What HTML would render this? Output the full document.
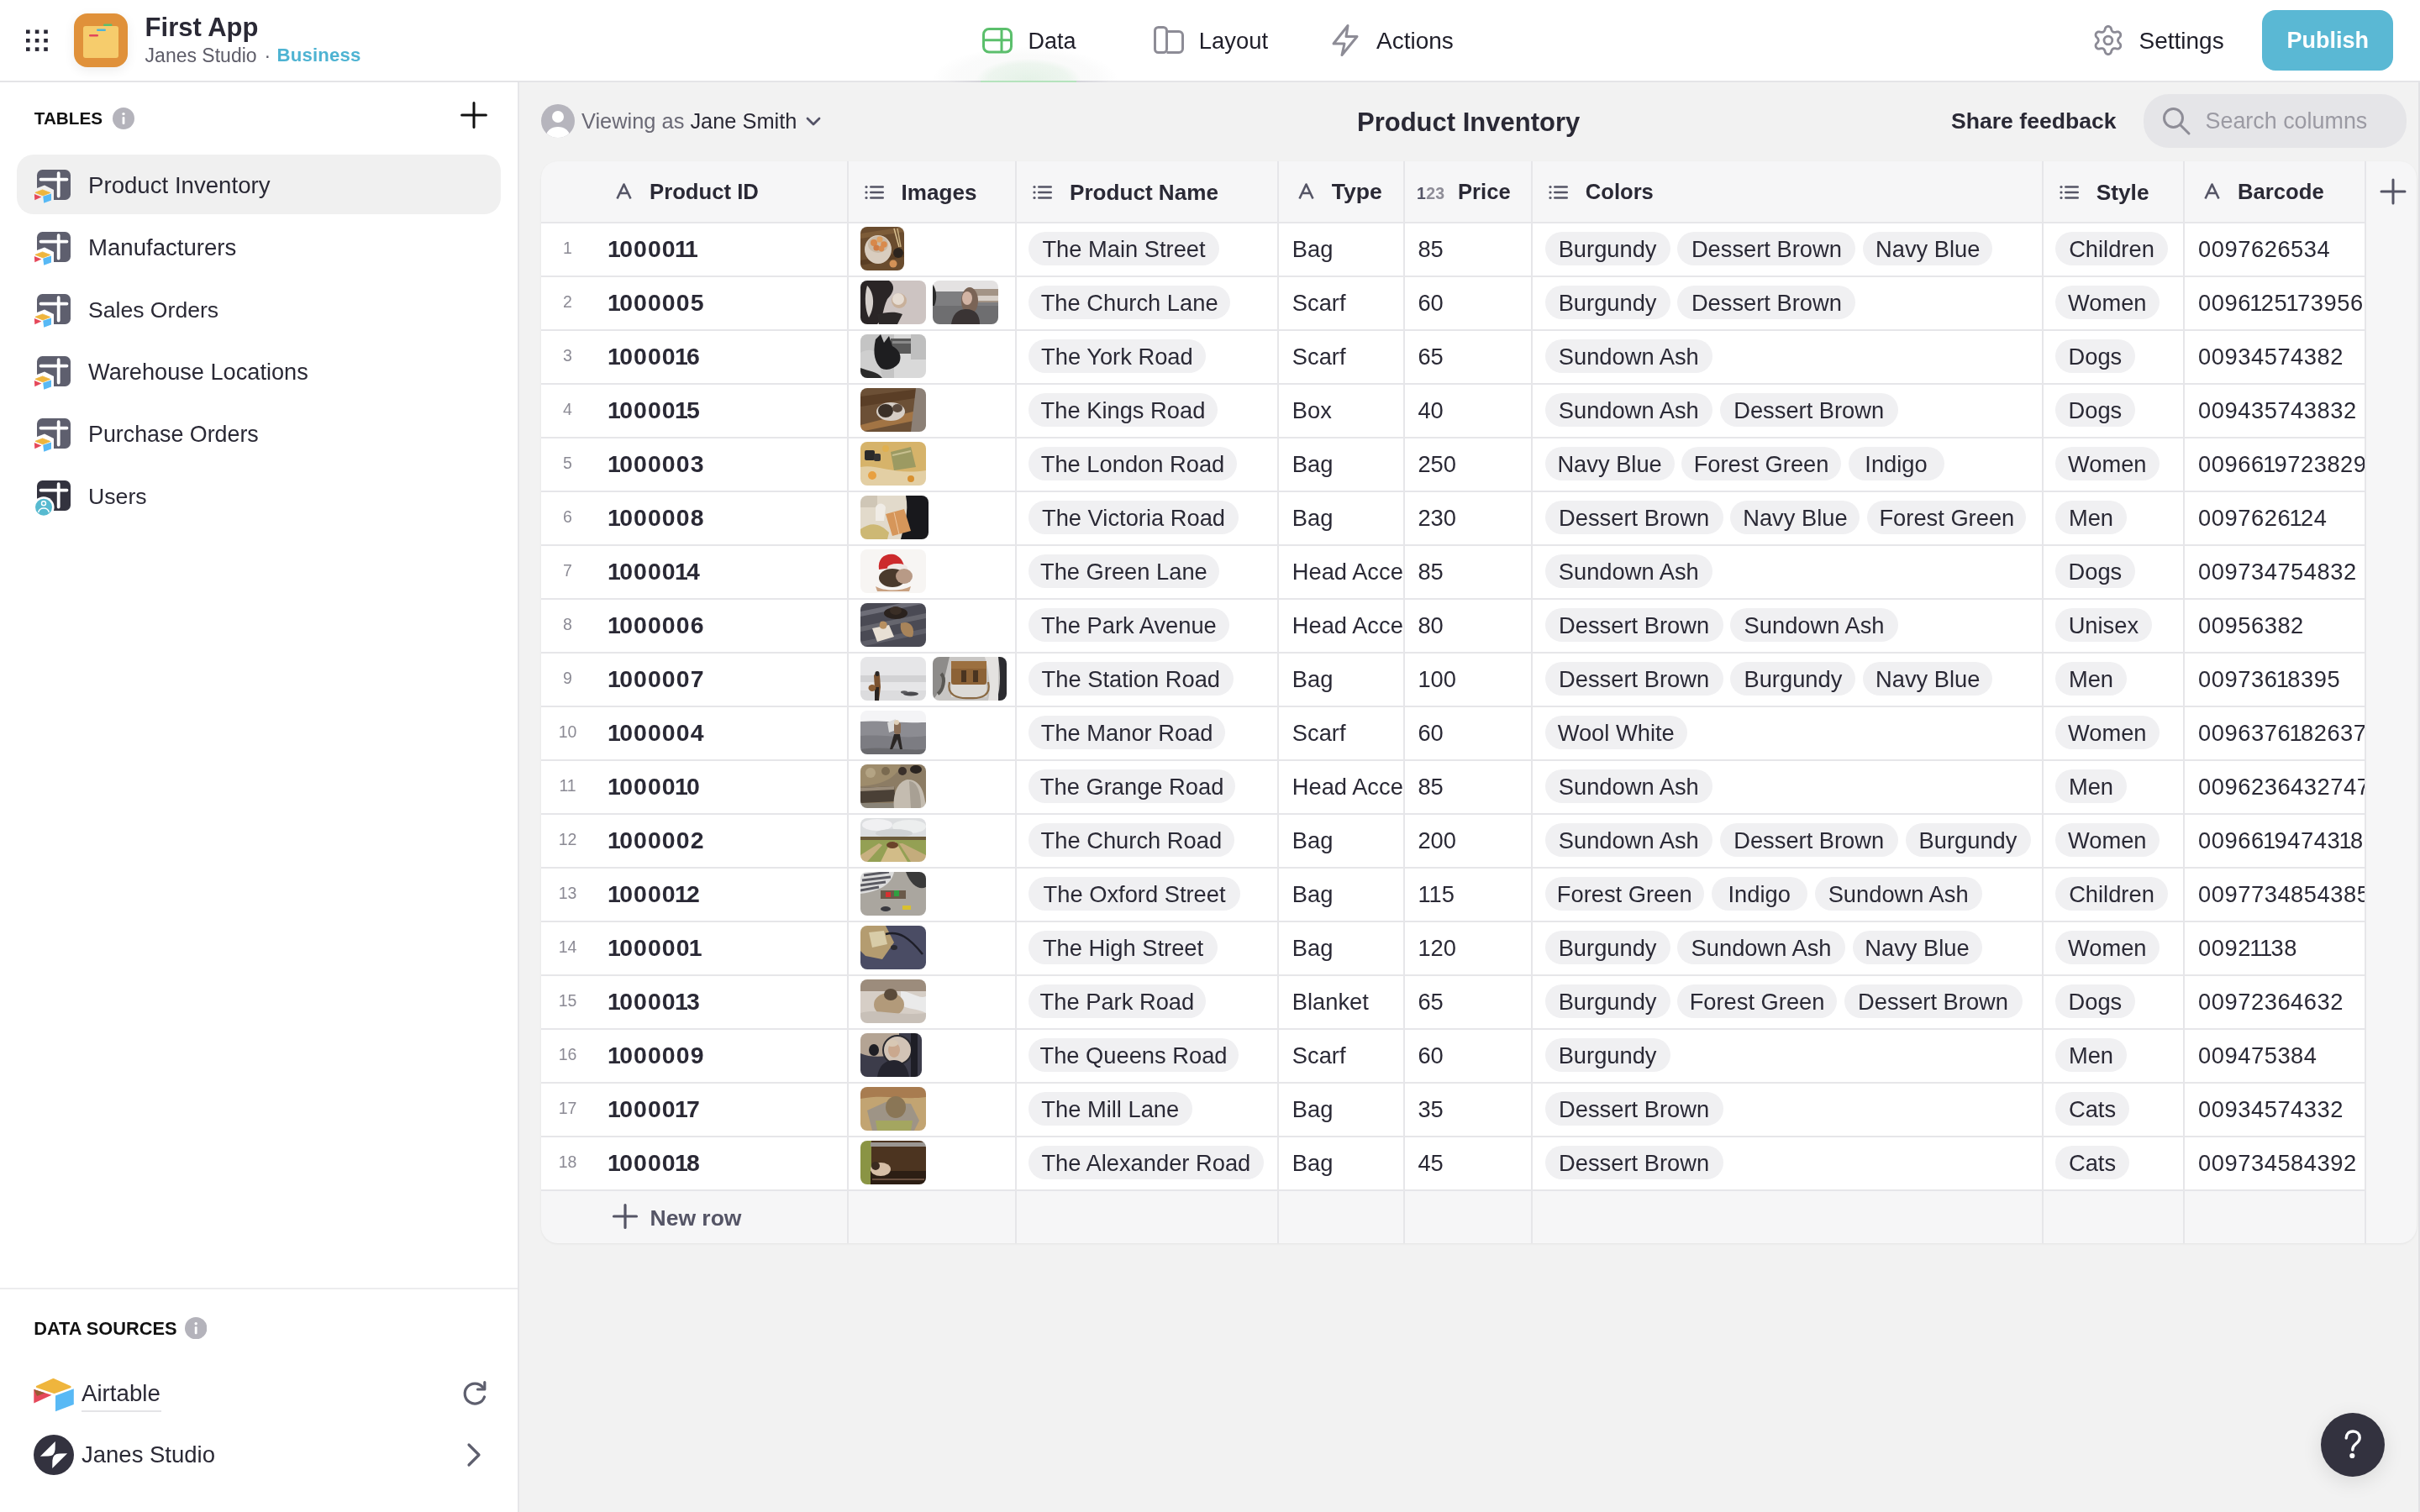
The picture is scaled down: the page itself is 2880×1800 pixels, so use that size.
<!DOCTYPE html><html><head><meta charset="utf-8"><style>html,body{margin:0;padding:0;width:2880px;height:1800px;overflow:hidden;}body{position:relative;font-family:"Liberation Sans", sans-serif;}.t{position:absolute;white-space:nowrap;}#root{position:absolute;left:0;top:0;width:2880px;height:1800px;will-change:transform;transform-origin:0 0;}@media (max-width:1500px){html,body{width:1440px;height:900px;}#root{transform:scale(0.5);}}.b{position:absolute;}</style></head><body><div id="root"><div class="b" style="left:0px;top:0px;width:2880px;height:1800px;background:#f2f2f2"></div><div class="b" style="left:0px;top:0px;width:2880px;height:96px;background:#fff"></div><div class="b" style="left:0px;top:96px;width:2880px;height:2px;background:#e4e4e7"></div><div class="b" style="left:0px;top:98px;width:616px;height:1702px;background:#fff"></div><div class="b" style="left:616px;top:98px;width:2px;height:1702px;background:#e6e6e9"></div><div class="b" style="left:2878px;top:98px;width:2px;height:1702px;background:#e2e2e5"></div><svg class="b" style="left:0px;top:0px;" width="70" height="80" viewBox="0 0 70 80"><rect x="31" y="35.5" width="4.6" height="4.6" fill="#2a2935"/><rect x="41.8" y="35.5" width="4.6" height="4.6" fill="#2a2935"/><rect x="52.2" y="35.5" width="4.6" height="4.6" fill="#2a2935"/><rect x="31" y="46" width="4.6" height="4.6" fill="#2a2935"/><rect x="41.8" y="46" width="4.6" height="4.6" fill="#2a2935"/><rect x="52.2" y="46" width="4.6" height="4.6" fill="#2a2935"/><rect x="31" y="56.3" width="4.6" height="4.6" fill="#2a2935"/><rect x="41.8" y="56.3" width="4.6" height="4.6" fill="#2a2935"/><rect x="52.2" y="56.3" width="4.6" height="4.6" fill="#2a2935"/></svg><div class="b" style="left:88px;top:16px;width:64px;height:64px;background:#e0913a;border-radius:16px;box-shadow:0 4px 14px rgba(0,0,0,0.07)"></div><svg class="b" style="left:88px;top:16px;" width="64" height="64" viewBox="0 0 64 64"><rect x="11" y="15" width="42" height="38" rx="3" fill="#f6cc6c"/><rect x="18" y="25" width="11" height="2.6" rx="1.3" fill="#e2475a"/><rect x="27" y="18.5" width="11" height="2.6" rx="1.3" fill="#4fb3d6"/><rect x="35" y="12.5" width="10.5" height="2.6" rx="1.3" fill="#5bbf70"/></svg><div class="t" style="left:172.6px;top:16.76px;font-size:31px;line-height:31px;color:#2a2935;font-weight:700;">First App</div><div class="t" style="left:172.6px;top:54.53px;font-size:23px;line-height:23px;color:#5d5c68;font-weight:400;">Janes Studio</div><div class="t" style="left:314.5px;top:54.53px;font-size:23px;line-height:23px;color:#5d5c68;font-weight:400;">&middot;</div><div class="t" style="left:329.6px;top:55.21px;font-size:22.2px;line-height:22.2px;color:#4eb3d2;font-weight:700;letter-spacing:0.15px">Business</div><svg class="b" style="left:1169px;top:33px;" width="37" height="31" viewBox="0 0 37 31"><rect x="1.5" y="1.5" width="33" height="27.5" rx="6.5" fill="none" stroke="#5bbf6c" stroke-width="3"/><line x1="1.5" y1="14.8" x2="35" y2="14.8" stroke="#5bbf6c" stroke-width="3"/><line x1="23" y1="1.5" x2="23" y2="29" stroke="#5bbf6c" stroke-width="3"/></svg><div class="t" style="left:1223.5px;top:35.74px;font-size:27px;line-height:27px;color:#1f1e29;font-weight:400;">Data</div><svg class="b" style="left:1373px;top:30.5px;" width="36" height="33" viewBox="0 0 36 33"><rect x="1.5" y="1.5" width="14" height="30" rx="4" fill="none" stroke="#8d8c96" stroke-width="3"/><path d="M15.5 6.5 H30 a4.5 4.5 0 0 1 4.5 4.5 V27 a4.5 4.5 0 0 1 -4.5 4.5 H15.5" fill="none" stroke="#8d8c96" stroke-width="3"/></svg><div class="t" style="left:1426.8px;top:35.41px;font-size:27.4px;line-height:27.4px;color:#1f1e29;font-weight:400;">Layout</div><svg class="b" style="left:1583px;top:28px;" width="36" height="40" viewBox="0 0 36 40"><path d="M21 2.5 L4 24 H17 L14 37.5 L32 15.5 H19 Z" fill="none" stroke="#8d8c96" stroke-width="3" stroke-linejoin="round"/></svg><div class="t" style="left:1638px;top:34.90px;font-size:28px;line-height:28px;color:#1f1e29;font-weight:400;">Actions</div><div class="b" style="left:1100px;top:56px;width:240px;height:40px;overflow:hidden"><div style="position:absolute;left:10px;top:0;width:220px;height:80px;border-radius:50%;background:radial-gradient(ellipse at center, rgba(120,130,125,0.05) 0%, rgba(120,130,125,0.035) 55%, rgba(120,130,125,0) 72%)"></div><div style="position:absolute;left:62px;top:14px;width:124px;height:52px;border-radius:50%;background:radial-gradient(ellipse at center, rgba(95,193,112,0.13) 0%, rgba(95,193,112,0.08) 55%, rgba(95,193,112,0) 72%)"></div></div><div class="b" style="left:1130px;top:96px;width:190px;height:2px;background:linear-gradient(90deg, rgba(200,200,206,0), #cfcfd6 25%, #cfcfd6 75%, rgba(200,200,206,0))"></div><div class="b" style="left:1167px;top:96px;width:114px;height:2px;background:#b5e3bd"></div><svg class="b" style="left:2490px;top:28px;" width="38" height="40" viewBox="0 0 38 40"><path d="M18.90,3.40 L19.48,3.45 L20.05,3.59 L20.60,3.83 L21.12,4.17 L21.62,4.60 L22.06,5.13 L22.44,5.82 L22.64,6.94 L22.92,7.64 L23.20,8.20 L23.48,8.68 L23.76,9.09 L24.05,9.44 L24.36,9.72 L24.70,9.95 L25.07,10.13 L25.47,10.26 L25.92,10.34 L26.42,10.38 L26.97,10.38 L27.60,10.34 L28.34,10.23 L29.41,9.85 L30.19,9.83 L30.88,9.95 L31.50,10.16 L32.05,10.45 L32.53,10.80 L32.95,11.22 L33.28,11.70 L33.52,12.22 L33.68,12.79 L33.75,13.39 L33.72,14.01 L33.60,14.65 L33.35,15.30 L32.95,15.97 L32.08,16.71 L31.62,17.30 L31.27,17.82 L30.99,18.30 L30.78,18.75 L30.62,19.18 L30.53,19.59 L30.50,20.00 L30.53,20.41 L30.62,20.82 L30.78,21.25 L30.99,21.70 L31.27,22.18 L31.62,22.70 L32.08,23.29 L32.95,24.03 L33.35,24.70 L33.60,25.35 L33.72,25.99 L33.75,26.61 L33.68,27.21 L33.52,27.78 L33.28,28.30 L32.95,28.78 L32.53,29.20 L32.05,29.55 L31.50,29.84 L30.88,30.05 L30.19,30.17 L29.41,30.15 L28.34,29.77 L27.60,29.66 L26.97,29.62 L26.42,29.62 L25.92,29.66 L25.47,29.74 L25.07,29.87 L24.70,30.05 L24.36,30.28 L24.05,30.56 L23.76,30.91 L23.48,31.32 L23.20,31.80 L22.92,32.36 L22.64,33.06 L22.44,34.18 L22.06,34.87 L21.62,35.40 L21.12,35.83 L20.60,36.17 L20.05,36.41 L19.48,36.55 L18.90,36.60 L18.32,36.55 L17.75,36.41 L17.20,36.17 L16.68,35.83 L16.18,35.40 L15.74,34.87 L15.36,34.18 L15.16,33.06 L14.88,32.36 L14.60,31.80 L14.32,31.32 L14.04,30.91 L13.75,30.56 L13.44,30.28 L13.10,30.05 L12.73,29.87 L12.33,29.74 L11.88,29.66 L11.38,29.62 L10.83,29.62 L10.20,29.66 L9.46,29.77 L8.39,30.15 L7.61,30.17 L6.92,30.05 L6.30,29.84 L5.75,29.55 L5.27,29.20 L4.85,28.78 L4.52,28.30 L4.28,27.78 L4.12,27.21 L4.05,26.61 L4.08,25.99 L4.20,25.35 L4.45,24.70 L4.85,24.03 L5.72,23.29 L6.18,22.70 L6.53,22.18 L6.81,21.70 L7.02,21.25 L7.18,20.82 L7.27,20.41 L7.30,20.00 L7.27,19.59 L7.18,19.18 L7.02,18.75 L6.81,18.30 L6.53,17.82 L6.18,17.30 L5.72,16.71 L4.85,15.97 L4.45,15.30 L4.20,14.65 L4.08,14.01 L4.05,13.39 L4.12,12.79 L4.28,12.22 L4.52,11.70 L4.85,11.22 L5.27,10.80 L5.75,10.45 L6.30,10.16 L6.92,9.95 L7.61,9.83 L8.39,9.85 L9.46,10.23 L10.20,10.34 L10.83,10.38 L11.38,10.38 L11.88,10.34 L12.33,10.26 L12.73,10.13 L13.10,9.95 L13.44,9.72 L13.75,9.44 L14.04,9.09 L14.32,8.68 L14.60,8.20 L14.88,7.64 L15.16,6.94 L15.36,5.82 L15.74,5.13 L16.18,4.60 L16.68,4.17 L17.20,3.83 L17.75,3.59 L18.32,3.45 Z" fill="none" stroke="#8b8a95" stroke-width="2.8" stroke-linejoin="round"/><circle cx="18.9" cy="20" r="4.9" fill="none" stroke="#8b8a95" stroke-width="2.8"/></svg><div class="t" style="left:2545.5px;top:34.50px;font-size:28px;line-height:28px;color:#1f1e29;font-weight:400;">Settings</div><div class="b" style="left:2692px;top:12px;width:156px;height:72px;background:#5ab8d4;border-radius:16px"></div><div class="t" style="left:2721.5px;top:35.34px;font-size:27px;line-height:27px;color:#fff;font-weight:700;">Publish</div><div class="t" style="left:40.8px;top:131.48px;font-size:20.7px;line-height:20.7px;color:#111;font-weight:700;">TABLES</div><svg class="b" style="left:134px;top:128px;" width="26" height="26" viewBox="0 0 26 26"><circle cx="13" cy="13" r="13" fill="#b4b3bb"/><rect x="11.6" y="11" width="2.8" height="9" rx="1" fill="#fff"/><circle cx="13" cy="7.6" r="1.7" fill="#fff"/></svg><svg class="b" style="left:546px;top:119px;" width="36" height="36" viewBox="0 0 36 36"><path d="M18 3.6 V32.4 M3.6 18 H32.4" stroke="#111" stroke-width="3" stroke-linecap="round"/></svg><div class="b" style="left:20px;top:184px;width:576px;height:71px;background:#f0f0f0;border-radius:20px"></div><svg class="b" style="left:40px;top:198px;" width="48" height="48" viewBox="0 0 48 48"><rect x="4" y="4" width="40" height="36" rx="6.5" fill="#5e5f6e"/><path d="M8.5 15.6 H39.5 M29.7 8.2 V35.5" stroke="#fff" stroke-width="3.8" stroke-linecap="round"/><path d="M0 27.5 L13 22.5 L24 28 L24 48 L0 48 Z" fill="#f0f0f0"/><path d="M1.9 31.3 L10.6 27.9 L19.8 31.5 L11 34.9 Z" fill="#efb53d" stroke="#efb53d" stroke-width="0.8" stroke-linejoin="round"/><path d="M0.9 32.9 L9.4 36.4 L1.3 40.2 Z" fill="#e5485a"/><path d="M11.2 35.7 L21 32.5 L21 40.6 L12.2 43.8 Z" fill="#58b9f5"/></svg><div class="t" style="left:105.0px;top:207.11px;font-size:27.63px;line-height:27.63px;color:#2a2935;font-weight:400;">Product Inventory</div><svg class="b" style="left:40px;top:272px;" width="48" height="48" viewBox="0 0 48 48"><rect x="4" y="4" width="40" height="36" rx="6.5" fill="#5e5f6e"/><path d="M8.5 15.6 H39.5 M29.7 8.2 V35.5" stroke="#fff" stroke-width="3.8" stroke-linecap="round"/><path d="M0 27.5 L13 22.5 L24 28 L24 48 L0 48 Z" fill="#fff"/><path d="M1.9 31.3 L10.6 27.9 L19.8 31.5 L11 34.9 Z" fill="#efb53d" stroke="#efb53d" stroke-width="0.8" stroke-linejoin="round"/><path d="M0.9 32.9 L9.4 36.4 L1.3 40.2 Z" fill="#e5485a"/><path d="M11.2 35.7 L21 32.5 L21 40.6 L12.2 43.8 Z" fill="#58b9f5"/></svg><div class="t" style="left:105.0px;top:281.15px;font-size:27.59px;line-height:27.59px;color:#2a2935;font-weight:400;">Manufacturers</div><svg class="b" style="left:40px;top:346px;" width="48" height="48" viewBox="0 0 48 48"><rect x="4" y="4" width="40" height="36" rx="6.5" fill="#5e5f6e"/><path d="M8.5 15.6 H39.5 M29.7 8.2 V35.5" stroke="#fff" stroke-width="3.8" stroke-linecap="round"/><path d="M0 27.5 L13 22.5 L24 28 L24 48 L0 48 Z" fill="#fff"/><path d="M1.9 31.3 L10.6 27.9 L19.8 31.5 L11 34.9 Z" fill="#efb53d" stroke="#efb53d" stroke-width="0.8" stroke-linejoin="round"/><path d="M0.9 32.9 L9.4 36.4 L1.3 40.2 Z" fill="#e5485a"/><path d="M11.2 35.7 L21 32.5 L21 40.6 L12.2 43.8 Z" fill="#58b9f5"/></svg><div class="t" style="left:105.0px;top:355.99px;font-size:26.59px;line-height:26.59px;color:#2a2935;font-weight:400;">Sales Orders</div><svg class="b" style="left:40px;top:420px;" width="48" height="48" viewBox="0 0 48 48"><rect x="4" y="4" width="40" height="36" rx="6.5" fill="#5e5f6e"/><path d="M8.5 15.6 H39.5 M29.7 8.2 V35.5" stroke="#fff" stroke-width="3.8" stroke-linecap="round"/><path d="M0 27.5 L13 22.5 L24 28 L24 48 L0 48 Z" fill="#fff"/><path d="M1.9 31.3 L10.6 27.9 L19.8 31.5 L11 34.9 Z" fill="#efb53d" stroke="#efb53d" stroke-width="0.8" stroke-linejoin="round"/><path d="M0.9 32.9 L9.4 36.4 L1.3 40.2 Z" fill="#e5485a"/><path d="M11.2 35.7 L21 32.5 L21 40.6 L12.2 43.8 Z" fill="#58b9f5"/></svg><div class="t" style="left:105.0px;top:429.49px;font-size:27.18px;line-height:27.18px;color:#2a2935;font-weight:400;">Warehouse Locations</div><svg class="b" style="left:40px;top:494px;" width="48" height="48" viewBox="0 0 48 48"><rect x="4" y="4" width="40" height="36" rx="6.5" fill="#5e5f6e"/><path d="M8.5 15.6 H39.5 M29.7 8.2 V35.5" stroke="#fff" stroke-width="3.8" stroke-linecap="round"/><path d="M0 27.5 L13 22.5 L24 28 L24 48 L0 48 Z" fill="#fff"/><path d="M1.9 31.3 L10.6 27.9 L19.8 31.5 L11 34.9 Z" fill="#efb53d" stroke="#efb53d" stroke-width="0.8" stroke-linejoin="round"/><path d="M0.9 32.9 L9.4 36.4 L1.3 40.2 Z" fill="#e5485a"/><path d="M11.2 35.7 L21 32.5 L21 40.6 L12.2 43.8 Z" fill="#58b9f5"/></svg><div class="t" style="left:105.0px;top:503.78px;font-size:26.84px;line-height:26.84px;color:#2a2935;font-weight:400;">Purchase Orders</div><svg class="b" style="left:40px;top:568px;" width="48" height="48" viewBox="0 0 48 48"><rect x="4" y="4" width="40" height="36" rx="6.5" fill="#33333f"/><path d="M8.5 15.6 H39.5 M29.7 8.2 V35.5" stroke="#fff" stroke-width="3.8" stroke-linecap="round"/><circle cx="12" cy="35.8" r="12.6" fill="#fff"/><circle cx="12" cy="35.8" r="10" fill="#57bad0"/><circle cx="12" cy="31.2" r="2.5" fill="none" stroke="#fff" stroke-width="1.4"/><path d="M5.6 42 a6.6 6.6 0 0 1 12.8 0" fill="none" stroke="#fff" stroke-width="1.4"/></svg><div class="t" style="left:105.0px;top:577.92px;font-size:26.67px;line-height:26.67px;color:#2a2935;font-weight:400;">Users</div><div class="b" style="left:0px;top:1533px;width:616px;height:2px;background:#ececee"></div><div class="t" style="left:40.2px;top:1570.55px;font-size:21.8px;line-height:21.8px;color:#111;font-weight:700;">DATA SOURCES</div><svg class="b" style="left:219.6px;top:1567.5px;" width="26.4" height="26.4" viewBox="0 0 26.4 26.4"><circle cx="13.2" cy="13.2" r="13.2" fill="#b4b3bb"/><rect x="11.8" y="11.2" width="2.8" height="9" rx="1" fill="#fff"/><circle cx="13.2" cy="7.8" r="1.7" fill="#fff"/></svg><svg class="b" style="left:40px;top:1639px;" width="48" height="42" viewBox="0 0 48 42"><path d="M4 11.8 L23.5 3.2 L43.5 12 L24.5 18.8 Z" fill="#efb53d" stroke="#efb53d" stroke-width="2.4" stroke-linejoin="round"/><path d="M0.3 15 L21.5 21.8 L0.3 31.6 Z" fill="#e5485a"/><path d="M0.3 15 L13.5 19.2 L4 23 Z" fill="#985a32"/><path d="M26 22.6 L47.8 14.2 L47.8 33 L26 41.2 Z" fill="#58b9f5"/></svg><div class="t" style="left:97px;top:1645.05px;font-size:27.7px;line-height:27.7px;color:#2a2935;font-weight:400;">Airtable</div><div class="b" style="left:97px;top:1679px;width:95px;height:2px;background:#e4e4e7"></div><svg class="b" style="left:548px;top:1642px;" width="34" height="34" viewBox="0 0 34 34"><path d="M26.5 9.5 A12 12 0 1 0 28.5 21" fill="none" stroke="#5e5f6e" stroke-width="3.2" stroke-linecap="round"/><path d="M28.8 3.5 V12 H20.5" fill="none" stroke="#5e5f6e" stroke-width="3.2" stroke-linecap="round" stroke-linejoin="round"/></svg><svg class="b" style="left:40px;top:1708px;" width="48" height="48" viewBox="0 0 48 48"><circle cx="24" cy="24" r="24" fill="#33323f"/><path d="M9 24 C16 23 22 17 23 9 C22 17 18 22 9 24 Z M24 24 C30 25 34 30 35 38" fill="none"/><path d="M7.9 25.7 L25.8 7.9 L25.6 17.4 Q25 25.5 17.4 25.5 Z" fill="#fff"/><path d="M40.1 22.3 L22.2 40.1 L22.4 30.6 Q23 22.5 30.6 22.5 Z" fill="#fff"/></svg><div class="t" style="left:97px;top:1718.22px;font-size:27.5px;line-height:27.5px;color:#2a2935;font-weight:400;">Janes Studio</div><svg class="b" style="left:552px;top:1716px;" width="24" height="32" viewBox="0 0 24 32"><path d="M6 4 L18 16 L6 28" fill="none" stroke="#5e5f6e" stroke-width="3.2" stroke-linecap="round" stroke-linejoin="round"/></svg><svg class="b" style="left:644px;top:124px;" width="40" height="40" viewBox="0 0 40 40"><defs><clipPath id="avc"><circle cx="20" cy="20" r="20"/></clipPath></defs><circle cx="20" cy="20" r="20" fill="#b6b5bd"/><g clip-path="url(#avc)"><circle cx="20" cy="15" r="7" fill="#fff"/><ellipse cx="20" cy="38" rx="14" ry="11" fill="#fff"/></g></svg><div class="t" style="left:692px;top:131.50px;font-size:25.4px;line-height:25.4px;color:#2a2935;font-weight:400;"><span style="color:#6a6975">Viewing as</span> Jane Smith</div><svg class="b" style="left:956px;top:136px;" width="24" height="18" viewBox="0 0 24 18"><path d="M5 5 L12 12 L19 5" fill="none" stroke="#535266" stroke-width="2.8" stroke-linecap="round" stroke-linejoin="round"/></svg><div class="t" style="left:1615px;top:129.56px;font-size:31px;line-height:31px;color:#2a2935;font-weight:700;">Product Inventory</div><div class="t" style="left:2322px;top:131.18px;font-size:26.6px;line-height:26.6px;color:#2a2935;font-weight:700;">Share feedback</div><div class="b" style="left:2551px;top:112px;width:313px;height:64px;background:#e5e5e8;border-radius:30px"></div><svg class="b" style="left:2572px;top:126px;" width="38" height="38" viewBox="0 0 38 38"><circle cx="14.5" cy="14.5" r="11" fill="none" stroke="#8e8d97" stroke-width="3"/><path d="M22.5 22.5 L33 33" stroke="#8e8d97" stroke-width="3" stroke-linecap="round"/></svg><div class="t" style="left:2624.5px;top:131.23px;font-size:26.9px;line-height:26.9px;color:#9b9aa3;font-weight:400;">Search columns</div><div class="b" style="left:644px;top:192px;width:2232px;height:1288px;background:#f6f6f7;border-radius:20px;box-shadow:0 1px 3px rgba(0,0,0,0.06);overflow:hidden"><div class="b" style="left:0;top:72px;width:2171px;height:1152px;background:#fff"></div><div class="b" style="left:0;top:72px;width:2171px;height:2px;background:#e6e6e9"></div><div class="b" style="left:0;top:136px;width:2171px;height:2px;background:#e6e6e9"></div><div class="b" style="left:0;top:200px;width:2171px;height:2px;background:#e6e6e9"></div><div class="b" style="left:0;top:264px;width:2171px;height:2px;background:#e6e6e9"></div><div class="b" style="left:0;top:328px;width:2171px;height:2px;background:#e6e6e9"></div><div class="b" style="left:0;top:392px;width:2171px;height:2px;background:#e6e6e9"></div><div class="b" style="left:0;top:456px;width:2171px;height:2px;background:#e6e6e9"></div><div class="b" style="left:0;top:520px;width:2171px;height:2px;background:#e6e6e9"></div><div class="b" style="left:0;top:584px;width:2171px;height:2px;background:#e6e6e9"></div><div class="b" style="left:0;top:648px;width:2171px;height:2px;background:#e6e6e9"></div><div class="b" style="left:0;top:712px;width:2171px;height:2px;background:#e6e6e9"></div><div class="b" style="left:0;top:776px;width:2171px;height:2px;background:#e6e6e9"></div><div class="b" style="left:0;top:840px;width:2171px;height:2px;background:#e6e6e9"></div><div class="b" style="left:0;top:904px;width:2171px;height:2px;background:#e6e6e9"></div><div class="b" style="left:0;top:968px;width:2171px;height:2px;background:#e6e6e9"></div><div class="b" style="left:0;top:1032px;width:2171px;height:2px;background:#e6e6e9"></div><div class="b" style="left:0;top:1096px;width:2171px;height:2px;background:#e6e6e9"></div><div class="b" style="left:0;top:1160px;width:2171px;height:2px;background:#e6e6e9"></div><div class="b" style="left:0;top:1224px;width:2171px;height:2px;background:#e6e6e9"></div><div class="b" style="left:364px;top:0;width:2px;height:1288px;background:#e6e6e9"></div><div class="b" style="left:564px;top:0;width:2px;height:1288px;background:#e6e6e9"></div><div class="b" style="left:876px;top:0;width:2px;height:1288px;background:#e6e6e9"></div><div class="b" style="left:1026px;top:0;width:2px;height:1288px;background:#e6e6e9"></div><div class="b" style="left:1178px;top:0;width:2px;height:1288px;background:#e6e6e9"></div><div class="b" style="left:1786px;top:0;width:2px;height:1288px;background:#e6e6e9"></div><div class="b" style="left:1954px;top:0;width:2px;height:1288px;background:#e6e6e9"></div><div class="b" style="left:2170px;top:0;width:2px;height:1288px;background:#e6e6e9"></div></div><svg class="b" style="left:733px;top:218px;" width="19" height="20" viewBox="0 0 19 20"><path d="M1.5 18.5 L9.5 1.5 L17.5 18.5 M4.6 12 H14.4" fill="none" stroke="#555566" stroke-width="2.6" stroke-linejoin="round"/></svg><div class="t" style="left:773px;top:216.24px;font-size:25.7px;line-height:25.7px;color:#2a2935;font-weight:700;">Product ID</div><svg class="b" style="left:1029px;top:220px;" width="24" height="18" viewBox="0 0 24 18"><g fill="#555566"><circle cx="2" cy="2.5" r="1.6"/><circle cx="2" cy="9" r="1.6"/><circle cx="2" cy="15.5" r="1.6"/><rect x="6" y="1.2" width="17" height="2.6" rx="1.3"/><rect x="6" y="7.7" width="17" height="2.6" rx="1.3"/><rect x="6" y="14.2" width="17" height="2.6" rx="1.3"/></g></svg><div class="t" style="left:1072.5px;top:215.91px;font-size:26.1px;line-height:26.1px;color:#2a2935;font-weight:700;">Images</div><svg class="b" style="left:1229px;top:220px;" width="24" height="18" viewBox="0 0 24 18"><g fill="#555566"><circle cx="2" cy="2.5" r="1.6"/><circle cx="2" cy="9" r="1.6"/><circle cx="2" cy="15.5" r="1.6"/><rect x="6" y="1.2" width="17" height="2.6" rx="1.3"/><rect x="6" y="7.7" width="17" height="2.6" rx="1.3"/><rect x="6" y="14.2" width="17" height="2.6" rx="1.3"/></g></svg><div class="t" style="left:1273px;top:215.91px;font-size:26.1px;line-height:26.1px;color:#2a2935;font-weight:700;">Product Name</div><svg class="b" style="left:1545px;top:218px;" width="19" height="20" viewBox="0 0 19 20"><path d="M1.5 18.5 L9.5 1.5 L17.5 18.5 M4.6 12 H14.4" fill="none" stroke="#555566" stroke-width="2.6" stroke-linejoin="round"/></svg><div class="t" style="left:1584.8px;top:215.48px;font-size:26.6px;line-height:26.6px;color:#2a2935;font-weight:700;">Type</div><div class="t" style="left:1686px;top:220.99px;font-size:19.5px;line-height:19.5px;color:#8e8d97;font-weight:700;letter-spacing:0.3px"><span style="color:#555566">1</span>23</div><div class="t" style="left:1735px;top:216.33px;font-size:25.6px;line-height:25.6px;color:#2a2935;font-weight:700;">Price</div><svg class="b" style="left:1843px;top:220px;" width="24" height="18" viewBox="0 0 24 18"><g fill="#555566"><circle cx="2" cy="2.5" r="1.6"/><circle cx="2" cy="9" r="1.6"/><circle cx="2" cy="15.5" r="1.6"/><rect x="6" y="1.2" width="17" height="2.6" rx="1.3"/><rect x="6" y="7.7" width="17" height="2.6" rx="1.3"/><rect x="6" y="14.2" width="17" height="2.6" rx="1.3"/></g></svg><div class="t" style="left:1886.8px;top:216.33px;font-size:25.6px;line-height:25.6px;color:#2a2935;font-weight:700;">Colors</div><svg class="b" style="left:2451px;top:220px;" width="24" height="18" viewBox="0 0 24 18"><g fill="#555566"><circle cx="2" cy="2.5" r="1.6"/><circle cx="2" cy="9" r="1.6"/><circle cx="2" cy="15.5" r="1.6"/><rect x="6" y="1.2" width="17" height="2.6" rx="1.3"/><rect x="6" y="7.7" width="17" height="2.6" rx="1.3"/><rect x="6" y="14.2" width="17" height="2.6" rx="1.3"/></g></svg><div class="t" style="left:2494.7px;top:215.74px;font-size:26.3px;line-height:26.3px;color:#2a2935;font-weight:700;">Style</div><svg class="b" style="left:2623px;top:218px;" width="19" height="20" viewBox="0 0 19 20"><path d="M1.5 18.5 L9.5 1.5 L17.5 18.5 M4.6 12 H14.4" fill="none" stroke="#555566" stroke-width="2.6" stroke-linejoin="round"/></svg><div class="t" style="left:2663px;top:216.24px;font-size:25.7px;line-height:25.7px;color:#2a2935;font-weight:700;">Barcode</div><svg class="b" style="left:2830px;top:210px;" width="36" height="36" viewBox="0 0 36 36"><path d="M18 4 V32 M4 18 H32" stroke="#555566" stroke-width="3" stroke-linecap="round"/></svg><div class="t" style="left:670.0780859375px;top:286.29px;font-size:19.5px;line-height:19.5px;color:#8b8a94;font-weight:400;">1</div><div class="t" style="left:725px;top:282.16px;font-size:28.4px;line-height:28.4px;color:#2a2935;font-weight:700;letter-spacing:1.1px"><span style="margin-left:-1.9px;letter-spacing:-1.7px">1</span>0000<span style="margin-left:-1.9px;letter-spacing:-1.7px">1</span><span style="margin-left:-1.9px;letter-spacing:-1.7px">1</span></div><div class="b" style="left:1024px;top:270px;width:52px;height:52px;border-radius:8px;overflow:hidden"><svg width="52" height="52" viewBox="0 0 52 52" preserveAspectRatio="none" style="display:block;filter:blur(0.6px)"><rect width="52" height="52" fill="#6a4c2e"/>
<path d="M0 8 L52 0 V6 L0 14Z" fill="#7d5c38"/><path d="M0 40 L52 30 V36 L0 46Z" fill="#5a3e24"/>
<ellipse cx="21" cy="27" rx="16" ry="17" fill="#d9cdbf"/><ellipse cx="21" cy="21" rx="12" ry="10" fill="#c9b9a5"/>
<circle cx="16" cy="19" r="4" fill="#d8884a"/><circle cx="23" cy="15" r="3.6" fill="#e0a060"/><circle cx="28" cy="21" r="3.8" fill="#d98a4c"/><circle cx="19" cy="25" r="3.6" fill="#d07c44"/><circle cx="25" cy="26" r="3.4" fill="#d88c50"/>
<circle cx="39" cy="44" r="4.5" fill="#d49256"/><circle cx="45" cy="31" r="6" fill="#2c241e"/>
<path d="M40 2 L46 24" stroke="#d8c090" stroke-width="1.5"/><path d="M44 2 L48 24" stroke="#c8b080" stroke-width="1.5"/></svg></div><div class="b" style="left:1224px;top:276px;width:227px;height:40px;background:#f0f0f2;border-radius:20px"></div><div class="t" style="left:1240.4px;top:283.09px;font-size:27.3px;line-height:27.3px;color:#2a2935;font-weight:400;">The Main Street</div><div class="t" style="left:1537.8px;top:283.09px;width:132.20000000000005px;height:38.2px;overflow:hidden;font-size:27.3px;line-height:27.3px;color:#2a2935;font-weight:400;">Bag</div><div class="t" style="left:1687.4px;top:283.09px;font-size:27.3px;line-height:27.3px;color:#2a2935;font-weight:400;">85</div><div class="b" style="left:1838.6px;top:276px;width:149px;height:40px;background:#f0f0f2;border-radius:20px"></div><div class="t" style="left:1854.67px;top:283.09px;font-size:27.3px;line-height:27.3px;color:#2a2935;font-weight:400;">Burgundy</div><div class="b" style="left:1996.3999999999999px;top:276px;width:212px;height:40px;background:#f0f0f2;border-radius:20px"></div><div class="t" style="left:2012.89px;top:283.09px;font-size:27.3px;line-height:27.3px;color:#2a2935;font-weight:400;">Dessert Brown</div><div class="b" style="left:2217.2px;top:276px;width:154px;height:40px;background:#f0f0f2;border-radius:20px"></div><div class="t" style="left:2231.99px;top:283.09px;font-size:27.3px;line-height:27.3px;color:#2a2935;font-weight:400;">Navy Blue</div><div class="b" style="left:2446px;top:276px;width:134px;height:40px;background:#f0f0f2;border-radius:20px"></div><div class="t" style="left:2462.17px;top:283.09px;font-size:27.3px;line-height:27.3px;color:#2a2935;font-weight:400;">Children</div><div class="t" style="left:2616px;top:283.09px;width:198px;height:38.2px;overflow:hidden;font-size:27.3px;line-height:27.3px;color:#2a2935;font-weight:400;letter-spacing:0.55px">0097626534</div><div class="t" style="left:670.0780859375px;top:350.29px;font-size:19.5px;line-height:19.5px;color:#8b8a94;font-weight:400;">2</div><div class="t" style="left:725px;top:346.16px;font-size:28.4px;line-height:28.4px;color:#2a2935;font-weight:700;letter-spacing:1.1px"><span style="margin-left:-1.9px;letter-spacing:-1.7px">1</span>000005</div><div class="b" style="left:1024px;top:334px;width:78px;height:52px;border-radius:8px;overflow:hidden"><svg width="78" height="52" viewBox="0 0 78 52" preserveAspectRatio="none" style="display:block;filter:blur(0.6px)"><rect width="78" height="52" fill="#cdc4c2"/>
<path d="M0 0 H34 C42 6 40 14 32 22 C26 34 28 44 20 52 H0Z" fill="#2a2526"/>
<path d="M8 6 C16 14 18 30 10 44 C6 36 4 20 8 6Z" fill="#d6d0cc"/>
<path d="M20 40 C30 38 40 36 50 40 L44 52 H22Z" fill="#2c2828"/>
<ellipse cx="46" cy="24" rx="9" ry="9" fill="#c8b09a"/><ellipse cx="45" cy="22" rx="7" ry="7" fill="#e6dcd2"/></svg></div><div class="b" style="left:1110px;top:334px;width:78px;height:52px;border-radius:8px;overflow:hidden"><svg width="78" height="52" viewBox="0 0 78 52" preserveAspectRatio="none" style="display:block;filter:blur(0.6px)"><rect width="78" height="52" fill="#7e7e80"/>
<rect width="78" height="13" fill="#e4e2e2"/>
<rect x="48" y="10" width="30" height="16" fill="#a39486"/><rect x="50" y="18" width="28" height="6" fill="#d8d0c8"/>
<path d="M0 4 C4 10 6 20 2 30 H0Z" fill="#2a2a2a"/>
<rect x="0" y="30" width="78" height="22" fill="#6e6e70"/>
<ellipse cx="44" cy="24" rx="10" ry="16" fill="#7a6456"/><ellipse cx="41" cy="21" rx="6" ry="8" fill="#d2b4a4"/>
<path d="M22 52 C24 38 32 34 40 34 C50 34 56 40 56 52Z" fill="#3a3434"/></svg></div><div class="b" style="left:1224px;top:340px;width:240.3px;height:40px;background:#f0f0f2;border-radius:20px"></div><div class="t" style="left:1238.68px;top:347.09px;font-size:27.3px;line-height:27.3px;color:#2a2935;font-weight:400;">The Church Lane</div><div class="t" style="left:1537.8px;top:347.09px;width:132.20000000000005px;height:38.2px;overflow:hidden;font-size:27.3px;line-height:27.3px;color:#2a2935;font-weight:400;">Scarf</div><div class="t" style="left:1687.4px;top:347.09px;font-size:27.3px;line-height:27.3px;color:#2a2935;font-weight:400;">60</div><div class="b" style="left:1838.6px;top:340px;width:149px;height:40px;background:#f0f0f2;border-radius:20px"></div><div class="t" style="left:1854.67px;top:347.09px;font-size:27.3px;line-height:27.3px;color:#2a2935;font-weight:400;">Burgundy</div><div class="b" style="left:1996.3999999999999px;top:340px;width:212px;height:40px;background:#f0f0f2;border-radius:20px"></div><div class="t" style="left:2012.89px;top:347.09px;font-size:27.3px;line-height:27.3px;color:#2a2935;font-weight:400;">Dessert Brown</div><div class="b" style="left:2446px;top:340px;width:123.5px;height:40px;background:#f0f0f2;border-radius:20px"></div><div class="t" style="left:2460.97px;top:347.09px;font-size:27.3px;line-height:27.3px;color:#2a2935;font-weight:400;">Women</div><div class="t" style="left:2616px;top:347.09px;width:198px;height:38.2px;overflow:hidden;font-size:27.3px;line-height:27.3px;color:#2a2935;font-weight:400;letter-spacing:0.55px">0096<span style="margin-left:-1.7px;letter-spacing:-1.7px">1</span>25<span style="margin-left:-1.7px;letter-spacing:-1.7px">1</span>73956</div><div class="t" style="left:670.0780859375px;top:414.29px;font-size:19.5px;line-height:19.5px;color:#8b8a94;font-weight:400;">3</div><div class="t" style="left:725px;top:410.16px;font-size:28.4px;line-height:28.4px;color:#2a2935;font-weight:700;letter-spacing:1.1px"><span style="margin-left:-1.9px;letter-spacing:-1.7px">1</span>0000<span style="margin-left:-1.9px;letter-spacing:-1.7px">1</span>6</div><div class="b" style="left:1024px;top:398px;width:78px;height:52px;border-radius:8px;overflow:hidden"><svg width="78" height="52" viewBox="0 0 78 52" preserveAspectRatio="none" style="display:block;filter:blur(0.6px)"><rect width="78" height="52" fill="#c4c4c4"/>
<rect x="40" y="0" width="38" height="52" fill="#d9d9d9"/><rect x="36" y="5" width="28" height="18" fill="#5a5a5a"/><rect x="38" y="8" width="24" height="3" fill="#8a8a8a"/>
<rect x="60" y="0" width="18" height="30" fill="#bfbfbf"/>
<path d="M0 22 C10 16 20 18 22 30 L26 52 H0Z" fill="#cfcfcf"/>
<path d="M18 6 L24 0 L28 10 L34 2 L38 14 C46 18 50 26 46 34 C40 42 30 44 24 40 C18 34 14 24 18 6Z" fill="#1e1e20"/>
<path d="M0 40 C10 44 20 44 26 52 H0Z" fill="#2a2a2a"/></svg></div><div class="b" style="left:1224px;top:404px;width:210.8px;height:40px;background:#f0f0f2;border-radius:20px"></div><div class="t" style="left:1239.1px;top:411.09px;font-size:27.3px;line-height:27.3px;color:#2a2935;font-weight:400;">The York Road</div><div class="t" style="left:1537.8px;top:411.09px;width:132.20000000000005px;height:38.2px;overflow:hidden;font-size:27.3px;line-height:27.3px;color:#2a2935;font-weight:400;">Scarf</div><div class="t" style="left:1687.4px;top:411.09px;font-size:27.3px;line-height:27.3px;color:#2a2935;font-weight:400;">65</div><div class="b" style="left:1838.6px;top:404px;width:199.3px;height:40px;background:#f0f0f2;border-radius:20px"></div><div class="t" style="left:1854.77px;top:411.09px;font-size:27.3px;line-height:27.3px;color:#2a2935;font-weight:400;">Sundown Ash</div><div class="b" style="left:2446px;top:404px;width:94.8px;height:40px;background:#f0f0f2;border-radius:20px"></div><div class="t" style="left:2461.54px;top:411.09px;font-size:27.3px;line-height:27.3px;color:#2a2935;font-weight:400;">Dogs</div><div class="t" style="left:2616px;top:411.09px;width:198px;height:38.2px;overflow:hidden;font-size:27.3px;line-height:27.3px;color:#2a2935;font-weight:400;letter-spacing:0.55px">00934574382</div><div class="t" style="left:670.0780859375px;top:478.29px;font-size:19.5px;line-height:19.5px;color:#8b8a94;font-weight:400;">4</div><div class="t" style="left:725px;top:474.16px;font-size:28.4px;line-height:28.4px;color:#2a2935;font-weight:700;letter-spacing:1.1px"><span style="margin-left:-1.9px;letter-spacing:-1.7px">1</span>0000<span style="margin-left:-1.9px;letter-spacing:-1.7px">1</span>5</div><div class="b" style="left:1024px;top:462px;width:78px;height:52px;border-radius:8px;overflow:hidden"><svg width="78" height="52" viewBox="0 0 78 52" preserveAspectRatio="none" style="display:block;filter:blur(0.6px)"><rect width="78" height="52" fill="#6c5036"/>
<path d="M0 10 L78 0 V10 L0 22Z" fill="#5a3e26"/>
<path d="M0 44 L78 24 V36 L0 52Z" fill="#a27444"/>
<path d="M66 0 H78 V52 H60Z" fill="#8c8076"/>
<ellipse cx="36" cy="28" rx="17" ry="11" fill="#d6cec6"/><ellipse cx="30" cy="27" rx="9" ry="8" fill="#3a3028"/><ellipse cx="44" cy="24" rx="6" ry="5" fill="#5a4a3e"/></svg></div><div class="b" style="left:1224px;top:468px;width:225px;height:40px;background:#f0f0f2;border-radius:20px"></div><div class="t" style="left:1238.62px;top:475.09px;font-size:27.3px;line-height:27.3px;color:#2a2935;font-weight:400;">The Kings Road</div><div class="t" style="left:1537.8px;top:475.09px;width:132.20000000000005px;height:38.2px;overflow:hidden;font-size:27.3px;line-height:27.3px;color:#2a2935;font-weight:400;">Box</div><div class="t" style="left:1687.4px;top:475.09px;font-size:27.3px;line-height:27.3px;color:#2a2935;font-weight:400;">40</div><div class="b" style="left:1838.6px;top:468px;width:199.3px;height:40px;background:#f0f0f2;border-radius:20px"></div><div class="t" style="left:1854.77px;top:475.09px;font-size:27.3px;line-height:27.3px;color:#2a2935;font-weight:400;">Sundown Ash</div><div class="b" style="left:2046.6999999999998px;top:468px;width:212px;height:40px;background:#f0f0f2;border-radius:20px"></div><div class="t" style="left:2063.19px;top:475.09px;font-size:27.3px;line-height:27.3px;color:#2a2935;font-weight:400;">Dessert Brown</div><div class="b" style="left:2446px;top:468px;width:94.8px;height:40px;background:#f0f0f2;border-radius:20px"></div><div class="t" style="left:2461.54px;top:475.09px;font-size:27.3px;line-height:27.3px;color:#2a2935;font-weight:400;">Dogs</div><div class="t" style="left:2616px;top:475.09px;width:198px;height:38.2px;overflow:hidden;font-size:27.3px;line-height:27.3px;color:#2a2935;font-weight:400;letter-spacing:0.55px">009435743832</div><div class="t" style="left:670.0780859375px;top:542.29px;font-size:19.5px;line-height:19.5px;color:#8b8a94;font-weight:400;">5</div><div class="t" style="left:725px;top:538.16px;font-size:28.4px;line-height:28.4px;color:#2a2935;font-weight:700;letter-spacing:1.1px"><span style="margin-left:-1.9px;letter-spacing:-1.7px">1</span>000003</div><div class="b" style="left:1024px;top:526px;width:78px;height:52px;border-radius:8px;overflow:hidden"><svg width="78" height="52" viewBox="0 0 78 52" preserveAspectRatio="none" style="display:block;filter:blur(0.6px)"><rect width="78" height="52" fill="#d6b36a"/>
<path d="M0 30 C20 26 40 40 78 34 V52 H0Z" fill="#e3cfa4"/>
<circle cx="14" cy="40" r="5" fill="#e8a040"/><circle cx="60" cy="44" r="4" fill="#d89030"/><circle cx="30" cy="8" r="4" fill="#e0b050"/>
<rect x="5" y="10" width="12" height="12" rx="2" fill="#2a2a2a"/><rect x="16" y="14" width="8" height="9" rx="2" fill="#333"/>
<path d="M36 12 L60 6 L66 30 L40 34Z" fill="#9c9a62"/><path d="M38 16 L60 11" stroke="#c8c090" stroke-width="2"/></svg></div><div class="b" style="left:1224px;top:532px;width:248px;height:40px;background:#f0f0f2;border-radius:20px"></div><div class="t" style="left:1238.72px;top:539.09px;font-size:27.3px;line-height:27.3px;color:#2a2935;font-weight:400;">The London Road</div><div class="t" style="left:1537.8px;top:539.09px;width:132.20000000000005px;height:38.2px;overflow:hidden;font-size:27.3px;line-height:27.3px;color:#2a2935;font-weight:400;">Bag</div><div class="t" style="left:1687.4px;top:539.09px;font-size:27.3px;line-height:27.3px;color:#2a2935;font-weight:400;">250</div><div class="b" style="left:1838.6px;top:532px;width:154px;height:40px;background:#f0f0f2;border-radius:20px"></div><div class="t" style="left:1853.39px;top:539.09px;font-size:27.3px;line-height:27.3px;color:#2a2935;font-weight:400;">Navy Blue</div><div class="b" style="left:2001.3999999999999px;top:532px;width:189.3px;height:40px;background:#f0f0f2;border-radius:20px"></div><div class="t" style="left:2015.64px;top:539.09px;font-size:27.3px;line-height:27.3px;color:#2a2935;font-weight:400;">Forest Green</div><div class="b" style="left:2199.5px;top:532px;width:114px;height:40px;background:#f0f0f2;border-radius:20px"></div><div class="t" style="left:2219.31px;top:539.09px;font-size:27.3px;line-height:27.3px;color:#2a2935;font-weight:400;">Indigo</div><div class="b" style="left:2446px;top:532px;width:123.5px;height:40px;background:#f0f0f2;border-radius:20px"></div><div class="t" style="left:2460.97px;top:539.09px;font-size:27.3px;line-height:27.3px;color:#2a2935;font-weight:400;">Women</div><div class="t" style="left:2616px;top:539.09px;width:198px;height:38.2px;overflow:hidden;font-size:27.3px;line-height:27.3px;color:#2a2935;font-weight:400;letter-spacing:0.55px">00966<span style="margin-left:-1.7px;letter-spacing:-1.7px">1</span>9723829</div><div class="t" style="left:670.0780859375px;top:606.29px;font-size:19.5px;line-height:19.5px;color:#8b8a94;font-weight:400;">6</div><div class="t" style="left:725px;top:602.16px;font-size:28.4px;line-height:28.4px;color:#2a2935;font-weight:700;letter-spacing:1.1px"><span style="margin-left:-1.9px;letter-spacing:-1.7px">1</span>000008</div><div class="b" style="left:1024px;top:590px;width:81px;height:52px;border-radius:8px;overflow:hidden"><svg width="81" height="52" viewBox="0 0 81 52" preserveAspectRatio="none" style="display:block;filter:blur(0.6px)"><rect width="81" height="52" fill="#e2dacb"/>
<rect x="0" y="0" width="20" height="14" fill="#cfc6b6"/>
<path d="M54 0 H81 V52 H48 C52 36 58 20 54 0Z" fill="#18181c"/>
<path d="M0 40 C14 30 24 34 34 44 L32 52 H0Z" fill="#cdb874"/>
<path d="M30 22 L52 16 L60 42 L38 48Z" fill="#d6965a"/><path d="M40 20 L46 46" stroke="#f0c8a0" stroke-width="1"/>
<path d="M18 14 C20 8 28 8 30 14 L28 30 L18 30Z" fill="#f0ece6"/></svg></div><div class="b" style="left:1224px;top:596px;width:250px;height:40px;background:#f0f0f2;border-radius:20px"></div><div class="t" style="left:1240.0px;top:603.09px;font-size:27.3px;line-height:27.3px;color:#2a2935;font-weight:400;">The Victoria Road</div><div class="t" style="left:1537.8px;top:603.09px;width:132.20000000000005px;height:38.2px;overflow:hidden;font-size:27.3px;line-height:27.3px;color:#2a2935;font-weight:400;">Bag</div><div class="t" style="left:1687.4px;top:603.09px;font-size:27.3px;line-height:27.3px;color:#2a2935;font-weight:400;">230</div><div class="b" style="left:1838.6px;top:596px;width:212px;height:40px;background:#f0f0f2;border-radius:20px"></div><div class="t" style="left:1855.09px;top:603.09px;font-size:27.3px;line-height:27.3px;color:#2a2935;font-weight:400;">Dessert Brown</div><div class="b" style="left:2059.4px;top:596px;width:154px;height:40px;background:#f0f0f2;border-radius:20px"></div><div class="t" style="left:2074.19px;top:603.09px;font-size:27.3px;line-height:27.3px;color:#2a2935;font-weight:400;">Navy Blue</div><div class="b" style="left:2222.2000000000003px;top:596px;width:189.3px;height:40px;background:#f0f0f2;border-radius:20px"></div><div class="t" style="left:2236.44px;top:603.09px;font-size:27.3px;line-height:27.3px;color:#2a2935;font-weight:400;">Forest Green</div><div class="b" style="left:2446px;top:596px;width:85px;height:40px;background:#f0f0f2;border-radius:20px"></div><div class="t" style="left:2461.95px;top:603.09px;font-size:27.3px;line-height:27.3px;color:#2a2935;font-weight:400;">Men</div><div class="t" style="left:2616px;top:603.09px;width:198px;height:38.2px;overflow:hidden;font-size:27.3px;line-height:27.3px;color:#2a2935;font-weight:400;letter-spacing:0.55px">0097626<span style="margin-left:-1.7px;letter-spacing:-1.7px">1</span>24</div><div class="t" style="left:670.0780859375px;top:670.29px;font-size:19.5px;line-height:19.5px;color:#8b8a94;font-weight:400;">7</div><div class="t" style="left:725px;top:666.16px;font-size:28.4px;line-height:28.4px;color:#2a2935;font-weight:700;letter-spacing:1.1px"><span style="margin-left:-1.9px;letter-spacing:-1.7px">1</span>0000<span style="margin-left:-1.9px;letter-spacing:-1.7px">1</span>4</div><div class="b" style="left:1024px;top:654px;width:78px;height:52px;border-radius:8px;overflow:hidden"><svg width="78" height="52" viewBox="0 0 78 52" preserveAspectRatio="none" style="display:block;filter:blur(0.6px)"><rect width="78" height="52" fill="#f7f5f3"/>
<path d="M22 24 C20 10 30 4 40 6 C46 8 50 12 52 20Z" fill="#cc2a2c"/>
<ellipse cx="44" cy="22" rx="12" ry="5" fill="#efe9e6"/>
<ellipse cx="38" cy="34" rx="16" ry="11" fill="#4a3a2c"/><ellipse cx="52" cy="32" rx="10" ry="9" fill="#b89a86"/>
<path d="M18 44 C28 50 48 50 60 44 L58 50 H20Z" fill="#c8a080"/></svg></div><div class="b" style="left:1224px;top:660px;width:226.8px;height:40px;background:#f0f0f2;border-radius:20px"></div><div class="t" style="left:1238.0px;top:667.09px;font-size:27.3px;line-height:27.3px;color:#2a2935;font-weight:400;">The Green Lane</div><div class="t" style="left:1537.8px;top:667.09px;width:132.20000000000005px;height:38.2px;overflow:hidden;font-size:27.3px;line-height:27.3px;color:#2a2935;font-weight:400;">Head Accessories</div><div class="t" style="left:1687.4px;top:667.09px;font-size:27.3px;line-height:27.3px;color:#2a2935;font-weight:400;">85</div><div class="b" style="left:1838.6px;top:660px;width:199.3px;height:40px;background:#f0f0f2;border-radius:20px"></div><div class="t" style="left:1854.77px;top:667.09px;font-size:27.3px;line-height:27.3px;color:#2a2935;font-weight:400;">Sundown Ash</div><div class="b" style="left:2446px;top:660px;width:94.8px;height:40px;background:#f0f0f2;border-radius:20px"></div><div class="t" style="left:2461.54px;top:667.09px;font-size:27.3px;line-height:27.3px;color:#2a2935;font-weight:400;">Dogs</div><div class="t" style="left:2616px;top:667.09px;width:198px;height:38.2px;overflow:hidden;font-size:27.3px;line-height:27.3px;color:#2a2935;font-weight:400;letter-spacing:0.55px">009734754832</div><div class="t" style="left:670.0780859375px;top:734.29px;font-size:19.5px;line-height:19.5px;color:#8b8a94;font-weight:400;">8</div><div class="t" style="left:725px;top:730.16px;font-size:28.4px;line-height:28.4px;color:#2a2935;font-weight:700;letter-spacing:1.1px"><span style="margin-left:-1.9px;letter-spacing:-1.7px">1</span>000006</div><div class="b" style="left:1024px;top:718px;width:78px;height:52px;border-radius:8px;overflow:hidden"><svg width="78" height="52" viewBox="0 0 78 52" preserveAspectRatio="none" style="display:block;filter:blur(0.6px)"><rect width="78" height="52" fill="#4a4a54"/>
<path d="M0 10 L78 -6 V0 L0 16Z" fill="#6e6e78"/><path d="M0 28 L78 12 V18 L0 34Z" fill="#66666e"/><path d="M0 46 L78 30 V36 L0 52Z" fill="#5e5e68"/>
<ellipse cx="42" cy="12" rx="14" ry="7" fill="#2a221e"/><ellipse cx="42" cy="9" rx="7" ry="5" fill="#3a2e26"/>
<path d="M14 30 L34 26 L40 40 L20 46Z" fill="#e8e0d4"/><path d="M24 22 C30 20 34 24 30 30 C26 32 20 30 24 22Z" fill="#b89060"/>
<path d="M48 24 C58 20 66 28 62 40 C54 42 46 36 48 24Z" fill="#a8845a"/></svg></div><div class="b" style="left:1224px;top:724px;width:238.7px;height:40px;background:#f0f0f2;border-radius:20px"></div><div class="t" style="left:1238.89px;top:731.09px;font-size:27.3px;line-height:27.3px;color:#2a2935;font-weight:400;">The Park Avenue</div><div class="t" style="left:1537.8px;top:731.09px;width:132.20000000000005px;height:38.2px;overflow:hidden;font-size:27.3px;line-height:27.3px;color:#2a2935;font-weight:400;">Head Accessories</div><div class="t" style="left:1687.4px;top:731.09px;font-size:27.3px;line-height:27.3px;color:#2a2935;font-weight:400;">80</div><div class="b" style="left:1838.6px;top:724px;width:212px;height:40px;background:#f0f0f2;border-radius:20px"></div><div class="t" style="left:1855.09px;top:731.09px;font-size:27.3px;line-height:27.3px;color:#2a2935;font-weight:400;">Dessert Brown</div><div class="b" style="left:2059.4px;top:724px;width:199.3px;height:40px;background:#f0f0f2;border-radius:20px"></div><div class="t" style="left:2075.57px;top:731.09px;font-size:27.3px;line-height:27.3px;color:#2a2935;font-weight:400;">Sundown Ash</div><div class="b" style="left:2446px;top:724px;width:114.7px;height:40px;background:#f0f0f2;border-radius:20px"></div><div class="t" style="left:2461.63px;top:731.09px;font-size:27.3px;line-height:27.3px;color:#2a2935;font-weight:400;">Unisex</div><div class="t" style="left:2616px;top:731.09px;width:198px;height:38.2px;overflow:hidden;font-size:27.3px;line-height:27.3px;color:#2a2935;font-weight:400;letter-spacing:0.55px">00956382</div><div class="t" style="left:670.0780859375px;top:798.29px;font-size:19.5px;line-height:19.5px;color:#8b8a94;font-weight:400;">9</div><div class="t" style="left:725px;top:794.16px;font-size:28.4px;line-height:28.4px;color:#2a2935;font-weight:700;letter-spacing:1.1px"><span style="margin-left:-1.9px;letter-spacing:-1.7px">1</span>000007</div><div class="b" style="left:1024px;top:782px;width:78px;height:52px;border-radius:8px;overflow:hidden"><svg width="78" height="52" viewBox="0 0 78 52" preserveAspectRatio="none" style="display:block;filter:blur(0.6px)"><rect width="78" height="52" fill="#e6e6e8"/>
<rect x="0" y="22" width="78" height="8" fill="#d2d2d4"/>
<rect x="0" y="40" width="78" height="12" fill="#dcdcde"/>
<path d="M16 22 C18 19 22 19 23 22 L24 36 L22 52 L18 52 L17 38Z" fill="#7a5230"/><ellipse cx="20" cy="20" rx="2.6" ry="3" fill="#2a2624"/>
<rect x="17" y="36" width="5" height="16" fill="#2a2420"/><ellipse cx="14" cy="37" rx="4.5" ry="4" fill="#8a5e36"/>
<ellipse cx="60" cy="44" rx="9" ry="2.5" fill="#4a4a4e"/><ellipse cx="52" cy="42" rx="4" ry="1.8" fill="#5a5a5e"/></svg></div><div class="b" style="left:1110px;top:782px;width:88px;height:52px;border-radius:8px;overflow:hidden"><svg width="88" height="52" viewBox="0 0 88 52" preserveAspectRatio="none" style="display:block;filter:blur(0.6px)"><rect width="88" height="52" fill="#c8c6c4"/>
<path d="M0 0 H20 C16 16 14 34 0 52Z" fill="#8e8c8a"/><path d="M10 20 C16 26 12 40 6 44" stroke="#5a5854" stroke-width="4" fill="none"/>
<path d="M78 0 H88 V52 H76 C82 34 80 16 78 0Z" fill="#2c2c30"/>
<path d="M62 0 H78 V52 H66 C70 36 66 14 62 0Z" fill="#e4e2e0"/>
<rect x="22" y="5" width="42" height="28" rx="3" fill="#8c6236"/><rect x="22" y="5" width="42" height="9" fill="#9c7040"/><rect x="34" y="16" width="6" height="14" fill="#4a3420"/><rect x="48" y="16" width="6" height="14" fill="#4a3420"/>
<rect x="22" y="33" width="42" height="15" fill="#dcdad6"/>
<path d="M20 30 C16 46 30 50 44 49 C58 50 70 46 66 30" fill="none" stroke="#8a6a44" stroke-width="2.2"/></svg></div><div class="b" style="left:1224px;top:788px;width:243.6px;height:40px;background:#f0f0f2;border-radius:20px"></div><div class="t" style="left:1239.57px;top:795.09px;font-size:27.3px;line-height:27.3px;color:#2a2935;font-weight:400;">The Station Road</div><div class="t" style="left:1537.8px;top:795.09px;width:132.20000000000005px;height:38.2px;overflow:hidden;font-size:27.3px;line-height:27.3px;color:#2a2935;font-weight:400;">Bag</div><div class="t" style="left:1687.4px;top:795.09px;font-size:27.3px;line-height:27.3px;color:#2a2935;font-weight:400;">100</div><div class="b" style="left:1838.6px;top:788px;width:212px;height:40px;background:#f0f0f2;border-radius:20px"></div><div class="t" style="left:1855.09px;top:795.09px;font-size:27.3px;line-height:27.3px;color:#2a2935;font-weight:400;">Dessert Brown</div><div class="b" style="left:2059.4px;top:788px;width:149px;height:40px;background:#f0f0f2;border-radius:20px"></div><div class="t" style="left:2075.47px;top:795.09px;font-size:27.3px;line-height:27.3px;color:#2a2935;font-weight:400;">Burgundy</div><div class="b" style="left:2217.2000000000003px;top:788px;width:154px;height:40px;background:#f0f0f2;border-radius:20px"></div><div class="t" style="left:2231.99px;top:795.09px;font-size:27.3px;line-height:27.3px;color:#2a2935;font-weight:400;">Navy Blue</div><div class="b" style="left:2446px;top:788px;width:85px;height:40px;background:#f0f0f2;border-radius:20px"></div><div class="t" style="left:2461.95px;top:795.09px;font-size:27.3px;line-height:27.3px;color:#2a2935;font-weight:400;">Men</div><div class="t" style="left:2616px;top:795.09px;width:198px;height:38.2px;overflow:hidden;font-size:27.3px;line-height:27.3px;color:#2a2935;font-weight:400;letter-spacing:0.55px">009736<span style="margin-left:-1.7px;letter-spacing:-1.7px">1</span>8395</div><div class="t" style="left:664.656171875px;top:862.29px;font-size:19.5px;line-height:19.5px;color:#8b8a94;font-weight:400;">10</div><div class="t" style="left:725px;top:858.16px;font-size:28.4px;line-height:28.4px;color:#2a2935;font-weight:700;letter-spacing:1.1px"><span style="margin-left:-1.9px;letter-spacing:-1.7px">1</span>000004</div><div class="b" style="left:1024px;top:846px;width:78px;height:52px;border-radius:8px;overflow:hidden"><svg width="78" height="52" viewBox="0 0 78 52" preserveAspectRatio="none" style="display:block;filter:blur(0.6px)"><rect width="78" height="52" fill="#f4f4f6"/>
<path d="M0 13 C20 11 50 15 78 14 V52 H0Z" fill="#8c8c92"/>
<path d="M0 30 C30 28 50 34 78 30 V52 H0Z" fill="#7c7c82"/>
<path d="M0 46 C30 42 50 48 78 46 V52 H0Z" fill="#6a6a6e"/>
<path d="M32 14 L42 10 L40 24 L34 26Z" fill="#dcdcdc"/>
<rect x="40" y="14" width="8" height="14" rx="3" fill="#8a6e56"/><ellipse cx="43" cy="14" rx="3" ry="3" fill="#e0d0b8"/>
<path d="M40 28 L47 28 L50 46 L47 46 L44 34 L38 46 L35 46Z" fill="#2a2624"/></svg></div><div class="b" style="left:1224px;top:852px;width:234.3px;height:40px;background:#f0f0f2;border-radius:20px"></div><div class="t" style="left:1238.73px;top:859.09px;font-size:27.3px;line-height:27.3px;color:#2a2935;font-weight:400;">The Manor Road</div><div class="t" style="left:1537.8px;top:859.09px;width:132.20000000000005px;height:38.2px;overflow:hidden;font-size:27.3px;line-height:27.3px;color:#2a2935;font-weight:400;">Scarf</div><div class="t" style="left:1687.4px;top:859.09px;font-size:27.3px;line-height:27.3px;color:#2a2935;font-weight:400;">60</div><div class="b" style="left:1838.6px;top:852px;width:169.2px;height:40px;background:#f0f0f2;border-radius:20px"></div><div class="t" style="left:1853.67px;top:859.09px;font-size:27.3px;line-height:27.3px;color:#2a2935;font-weight:400;">Wool White</div><div class="b" style="left:2446px;top:852px;width:123.5px;height:40px;background:#f0f0f2;border-radius:20px"></div><div class="t" style="left:2460.97px;top:859.09px;font-size:27.3px;line-height:27.3px;color:#2a2935;font-weight:400;">Women</div><div class="t" style="left:2616px;top:859.09px;width:198px;height:38.2px;overflow:hidden;font-size:27.3px;line-height:27.3px;color:#2a2935;font-weight:400;letter-spacing:0.55px">0096376<span style="margin-left:-1.7px;letter-spacing:-1.7px">1</span>82637</div><div class="t" style="left:665.3798046875px;top:926.29px;font-size:19.5px;line-height:19.5px;color:#8b8a94;font-weight:400;">11</div><div class="t" style="left:725px;top:922.16px;font-size:28.4px;line-height:28.4px;color:#2a2935;font-weight:700;letter-spacing:1.1px"><span style="margin-left:-1.9px;letter-spacing:-1.7px">1</span>0000<span style="margin-left:-1.9px;letter-spacing:-1.7px">1</span>0</div><div class="b" style="left:1024px;top:910px;width:78px;height:52px;border-radius:8px;overflow:hidden"><svg width="78" height="52" viewBox="0 0 78 52" preserveAspectRatio="none" style="display:block;filter:blur(0.6px)"><rect width="78" height="52" fill="#8c7c64"/>
<path d="M0 0 H48 C44 14 30 24 0 26Z" fill="#9e8c6c"/><circle cx="12" cy="10" r="6" fill="#b4a484"/><circle cx="30" cy="8" r="5" fill="#7a6a50"/>
<path d="M0 28 L40 26 L42 44 L0 46Z" fill="#4a4036"/><path d="M0 28 L40 26 L40 30 L0 32Z" fill="#9a8c7a"/>
<path d="M0 46 H78 V52 H0Z" fill="#8a8478"/>
<path d="M40 52 C38 36 44 20 56 18 C70 18 76 30 78 52Z" fill="#c4bcb0"/><path d="M58 20 C66 20 72 30 72 52 H60Z" fill="#a8a094"/>
<ellipse cx="50" cy="8" rx="5" ry="5" fill="#3a302a"/><ellipse cx="66" cy="6" rx="7" ry="5" fill="#2a2420"/></svg></div><div class="b" style="left:1224px;top:916px;width:246.2px;height:40px;background:#f0f0f2;border-radius:20px"></div><div class="t" style="left:1237.84px;top:923.09px;font-size:27.3px;line-height:27.3px;color:#2a2935;font-weight:400;">The Grange Road</div><div class="t" style="left:1537.8px;top:923.09px;width:132.20000000000005px;height:38.2px;overflow:hidden;font-size:27.3px;line-height:27.3px;color:#2a2935;font-weight:400;">Head Accessories</div><div class="t" style="left:1687.4px;top:923.09px;font-size:27.3px;line-height:27.3px;color:#2a2935;font-weight:400;">85</div><div class="b" style="left:1838.6px;top:916px;width:199.3px;height:40px;background:#f0f0f2;border-radius:20px"></div><div class="t" style="left:1854.77px;top:923.09px;font-size:27.3px;line-height:27.3px;color:#2a2935;font-weight:400;">Sundown Ash</div><div class="b" style="left:2446px;top:916px;width:85px;height:40px;background:#f0f0f2;border-radius:20px"></div><div class="t" style="left:2461.95px;top:923.09px;font-size:27.3px;line-height:27.3px;color:#2a2935;font-weight:400;">Men</div><div class="t" style="left:2616px;top:923.09px;width:198px;height:38.2px;overflow:hidden;font-size:27.3px;line-height:27.3px;color:#2a2935;font-weight:400;letter-spacing:0.55px">0096236432747</div><div class="t" style="left:664.656171875px;top:990.29px;font-size:19.5px;line-height:19.5px;color:#8b8a94;font-weight:400;">12</div><div class="t" style="left:725px;top:986.16px;font-size:28.4px;line-height:28.4px;color:#2a2935;font-weight:700;letter-spacing:1.1px"><span style="margin-left:-1.9px;letter-spacing:-1.7px">1</span>000002</div><div class="b" style="left:1024px;top:974px;width:78px;height:52px;border-radius:8px;overflow:hidden"><svg width="78" height="52" viewBox="0 0 78 52" preserveAspectRatio="none" style="display:block;filter:blur(0.6px)"><rect width="78" height="52" fill="#dcdee0"/>
<ellipse cx="20" cy="8" rx="18" ry="7" fill="#f0f0f2"/><ellipse cx="58" cy="10" rx="20" ry="8" fill="#eceeee"/><ellipse cx="40" cy="18" rx="22" ry="5" fill="#d0d2d4"/>
<rect x="0" y="22" width="78" height="4" fill="#6a5a3a"/>
<path d="M0 26 H78 V52 H0Z" fill="#94a054"/>
<path d="M24 52 L36 28 H42 L56 52Z" fill="#d2bc88"/><path d="M0 44 L22 30 L26 32 L8 52 H0Z" fill="#c8b080"/><path d="M60 52 L46 30 L50 30 L78 44 V52Z" fill="#c4ac7c"/>
<ellipse cx="38" cy="32" rx="7" ry="4" fill="#6a442a"/></svg></div><div class="b" style="left:1224px;top:980px;width:244.7px;height:40px;background:#f0f0f2;border-radius:20px"></div><div class="t" style="left:1238.62px;top:987.09px;font-size:27.3px;line-height:27.3px;color:#2a2935;font-weight:400;">The Church Road</div><div class="t" style="left:1537.8px;top:987.09px;width:132.20000000000005px;height:38.2px;overflow:hidden;font-size:27.3px;line-height:27.3px;color:#2a2935;font-weight:400;">Bag</div><div class="t" style="left:1687.4px;top:987.09px;font-size:27.3px;line-height:27.3px;color:#2a2935;font-weight:400;">200</div><div class="b" style="left:1838.6px;top:980px;width:199.3px;height:40px;background:#f0f0f2;border-radius:20px"></div><div class="t" style="left:1854.77px;top:987.09px;font-size:27.3px;line-height:27.3px;color:#2a2935;font-weight:400;">Sundown Ash</div><div class="b" style="left:2046.6999999999998px;top:980px;width:212px;height:40px;background:#f0f0f2;border-radius:20px"></div><div class="t" style="left:2063.19px;top:987.09px;font-size:27.3px;line-height:27.3px;color:#2a2935;font-weight:400;">Dessert Brown</div><div class="b" style="left:2267.5px;top:980px;width:149px;height:40px;background:#f0f0f2;border-radius:20px"></div><div class="t" style="left:2283.57px;top:987.09px;font-size:27.3px;line-height:27.3px;color:#2a2935;font-weight:400;">Burgundy</div><div class="b" style="left:2446px;top:980px;width:123.5px;height:40px;background:#f0f0f2;border-radius:20px"></div><div class="t" style="left:2460.97px;top:987.09px;font-size:27.3px;line-height:27.3px;color:#2a2935;font-weight:400;">Women</div><div class="t" style="left:2616px;top:987.09px;width:198px;height:38.2px;overflow:hidden;font-size:27.3px;line-height:27.3px;color:#2a2935;font-weight:400;letter-spacing:0.55px">00966<span style="margin-left:-1.7px;letter-spacing:-1.7px">1</span>94743<span style="margin-left:-1.7px;letter-spacing:-1.7px">1</span>8</div><div class="t" style="left:664.656171875px;top:1054.29px;font-size:19.5px;line-height:19.5px;color:#8b8a94;font-weight:400;">13</div><div class="t" style="left:725px;top:1050.16px;font-size:28.4px;line-height:28.4px;color:#2a2935;font-weight:700;letter-spacing:1.1px"><span style="margin-left:-1.9px;letter-spacing:-1.7px">1</span>0000<span style="margin-left:-1.9px;letter-spacing:-1.7px">1</span>2</div><div class="b" style="left:1024px;top:1038px;width:78px;height:52px;border-radius:8px;overflow:hidden"><svg width="78" height="52" viewBox="0 0 78 52" preserveAspectRatio="none" style="display:block;filter:blur(0.6px)"><rect width="78" height="52" fill="#aaa69f"/>
<path d="M0 0 H40 C38 10 30 22 0 26Z" fill="#dcdcdc"/>
<path d="M4 4 L34 0 M2 10 L36 6 M0 16 L30 12 M0 22 L22 18" stroke="#5a5a62" stroke-width="3"/>
<path d="M54 0 H78 V18 C70 22 60 16 54 0Z" fill="#3a3a3a"/>
<rect x="24" y="22" width="30" height="10" fill="#6a5a4a"/><rect x="30" y="24" width="6" height="6" fill="#d83030"/><rect x="40" y="22" width="6" height="7" fill="#30a040"/>
<ellipse cx="30" cy="44" rx="6" ry="3" fill="#3a3a40"/><rect x="50" y="40" width="10" height="5" fill="#d8c030"/></svg></div><div class="b" style="left:1224px;top:1044px;width:252.1px;height:40px;background:#f0f0f2;border-radius:20px"></div><div class="t" style="left:1241.57px;top:1051.09px;font-size:27.3px;line-height:27.3px;color:#2a2935;font-weight:400;">The Oxford Street</div><div class="t" style="left:1537.8px;top:1051.09px;width:132.20000000000005px;height:38.2px;overflow:hidden;font-size:27.3px;line-height:27.3px;color:#2a2935;font-weight:400;">Bag</div><div class="t" style="left:1687.4px;top:1051.09px;font-size:27.3px;line-height:27.3px;color:#2a2935;font-weight:400;">115</div><div class="b" style="left:1838.6px;top:1044px;width:189.3px;height:40px;background:#f0f0f2;border-radius:20px"></div><div class="t" style="left:1852.84px;top:1051.09px;font-size:27.3px;line-height:27.3px;color:#2a2935;font-weight:400;">Forest Green</div><div class="b" style="left:2036.6999999999998px;top:1044px;width:114px;height:40px;background:#f0f0f2;border-radius:20px"></div><div class="t" style="left:2056.51px;top:1051.09px;font-size:27.3px;line-height:27.3px;color:#2a2935;font-weight:400;">Indigo</div><div class="b" style="left:2159.5px;top:1044px;width:199.3px;height:40px;background:#f0f0f2;border-radius:20px"></div><div class="t" style="left:2175.67px;top:1051.09px;font-size:27.3px;line-height:27.3px;color:#2a2935;font-weight:400;">Sundown Ash</div><div class="b" style="left:2446px;top:1044px;width:134px;height:40px;background:#f0f0f2;border-radius:20px"></div><div class="t" style="left:2462.17px;top:1051.09px;font-size:27.3px;line-height:27.3px;color:#2a2935;font-weight:400;">Children</div><div class="t" style="left:2616px;top:1051.09px;width:198px;height:38.2px;overflow:hidden;font-size:27.3px;line-height:27.3px;color:#2a2935;font-weight:400;letter-spacing:0.55px">0097734854385</div><div class="t" style="left:664.656171875px;top:1118.29px;font-size:19.5px;line-height:19.5px;color:#8b8a94;font-weight:400;">14</div><div class="t" style="left:725px;top:1114.16px;font-size:28.4px;line-height:28.4px;color:#2a2935;font-weight:700;letter-spacing:1.1px"><span style="margin-left:-1.9px;letter-spacing:-1.7px">1</span>00000<span style="margin-left:-1.9px;letter-spacing:-1.7px">1</span></div><div class="b" style="left:1024px;top:1102px;width:78px;height:52px;border-radius:8px;overflow:hidden"><svg width="78" height="52" viewBox="0 0 78 52" preserveAspectRatio="none" style="display:block;filter:blur(0.6px)"><rect width="78" height="52" fill="#4a4c64"/>
<path d="M0 0 H30 L40 20 L26 40 L6 36 L0 30Z" fill="#b49c70"/><path d="M10 8 L28 6 L32 22 L14 26Z" fill="#d8cca8"/>
<path d="M30 10 C46 6 58 14 74 34" fill="none" stroke="#1e1e28" stroke-width="2.5"/>
<ellipse cx="40" cy="26" rx="4" ry="3" fill="#2a2a30"/></svg></div><div class="b" style="left:1224px;top:1108px;width:225px;height:40px;background:#f0f0f2;border-radius:20px"></div><div class="t" style="left:1240.91px;top:1115.09px;font-size:27.3px;line-height:27.3px;color:#2a2935;font-weight:400;">The High Street</div><div class="t" style="left:1537.8px;top:1115.09px;width:132.20000000000005px;height:38.2px;overflow:hidden;font-size:27.3px;line-height:27.3px;color:#2a2935;font-weight:400;">Bag</div><div class="t" style="left:1687.4px;top:1115.09px;font-size:27.3px;line-height:27.3px;color:#2a2935;font-weight:400;">120</div><div class="b" style="left:1838.6px;top:1108px;width:149px;height:40px;background:#f0f0f2;border-radius:20px"></div><div class="t" style="left:1854.67px;top:1115.09px;font-size:27.3px;line-height:27.3px;color:#2a2935;font-weight:400;">Burgundy</div><div class="b" style="left:1996.3999999999999px;top:1108px;width:199.3px;height:40px;background:#f0f0f2;border-radius:20px"></div><div class="t" style="left:2012.57px;top:1115.09px;font-size:27.3px;line-height:27.3px;color:#2a2935;font-weight:400;">Sundown Ash</div><div class="b" style="left:2204.5px;top:1108px;width:154px;height:40px;background:#f0f0f2;border-radius:20px"></div><div class="t" style="left:2219.29px;top:1115.09px;font-size:27.3px;line-height:27.3px;color:#2a2935;font-weight:400;">Navy Blue</div><div class="b" style="left:2446px;top:1108px;width:123.5px;height:40px;background:#f0f0f2;border-radius:20px"></div><div class="t" style="left:2460.97px;top:1115.09px;font-size:27.3px;line-height:27.3px;color:#2a2935;font-weight:400;">Women</div><div class="t" style="left:2616px;top:1115.09px;width:198px;height:38.2px;overflow:hidden;font-size:27.3px;line-height:27.3px;color:#2a2935;font-weight:400;letter-spacing:0.55px">0092<span style="margin-left:-1.7px;letter-spacing:-1.7px">1</span><span style="margin-left:-1.7px;letter-spacing:-1.7px">1</span>38</div><div class="t" style="left:664.656171875px;top:1182.29px;font-size:19.5px;line-height:19.5px;color:#8b8a94;font-weight:400;">15</div><div class="t" style="left:725px;top:1178.16px;font-size:28.4px;line-height:28.4px;color:#2a2935;font-weight:700;letter-spacing:1.1px"><span style="margin-left:-1.9px;letter-spacing:-1.7px">1</span>0000<span style="margin-left:-1.9px;letter-spacing:-1.7px">1</span>3</div><div class="b" style="left:1024px;top:1166px;width:78px;height:52px;border-radius:8px;overflow:hidden"><svg width="78" height="52" viewBox="0 0 78 52" preserveAspectRatio="none" style="display:block;filter:blur(0.6px)"><rect width="78" height="52" fill="#d6cec6"/>
<rect x="0" y="0" width="78" height="14" fill="#9c8c7c"/>
<path d="M48 14 C60 14 70 24 78 20 V40 C66 34 56 36 48 30Z" fill="#eaeaea"/>
<ellipse cx="34" cy="30" rx="18" ry="14" fill="#b29a7a"/><ellipse cx="36" cy="18" rx="8" ry="7" fill="#5a4a3a"/>
<path d="M0 40 C20 34 40 44 78 40 V52 H0Z" fill="#c8c0b8"/></svg></div><div class="b" style="left:1224px;top:1172px;width:210.8px;height:40px;background:#f0f0f2;border-radius:20px"></div><div class="t" style="left:1237.6px;top:1179.09px;font-size:27.3px;line-height:27.3px;color:#2a2935;font-weight:400;">The Park Road</div><div class="t" style="left:1537.8px;top:1179.09px;width:132.20000000000005px;height:38.2px;overflow:hidden;font-size:27.3px;line-height:27.3px;color:#2a2935;font-weight:400;">Blanket</div><div class="t" style="left:1687.4px;top:1179.09px;font-size:27.3px;line-height:27.3px;color:#2a2935;font-weight:400;">65</div><div class="b" style="left:1838.6px;top:1172px;width:149px;height:40px;background:#f0f0f2;border-radius:20px"></div><div class="t" style="left:1854.67px;top:1179.09px;font-size:27.3px;line-height:27.3px;color:#2a2935;font-weight:400;">Burgundy</div><div class="b" style="left:1996.3999999999999px;top:1172px;width:189.3px;height:40px;background:#f0f0f2;border-radius:20px"></div><div class="t" style="left:2010.64px;top:1179.09px;font-size:27.3px;line-height:27.3px;color:#2a2935;font-weight:400;">Forest Green</div><div class="b" style="left:2194.5px;top:1172px;width:212px;height:40px;background:#f0f0f2;border-radius:20px"></div><div class="t" style="left:2210.99px;top:1179.09px;font-size:27.3px;line-height:27.3px;color:#2a2935;font-weight:400;">Dessert Brown</div><div class="b" style="left:2446px;top:1172px;width:94.8px;height:40px;background:#f0f0f2;border-radius:20px"></div><div class="t" style="left:2461.54px;top:1179.09px;font-size:27.3px;line-height:27.3px;color:#2a2935;font-weight:400;">Dogs</div><div class="t" style="left:2616px;top:1179.09px;width:198px;height:38.2px;overflow:hidden;font-size:27.3px;line-height:27.3px;color:#2a2935;font-weight:400;letter-spacing:0.55px">00972364632</div><div class="t" style="left:664.656171875px;top:1246.29px;font-size:19.5px;line-height:19.5px;color:#8b8a94;font-weight:400;">16</div><div class="t" style="left:725px;top:1242.16px;font-size:28.4px;line-height:28.4px;color:#2a2935;font-weight:700;letter-spacing:1.1px"><span style="margin-left:-1.9px;letter-spacing:-1.7px">1</span>000009</div><div class="b" style="left:1024px;top:1230px;width:73px;height:52px;border-radius:8px;overflow:hidden"><svg width="73" height="52" viewBox="0 0 73 52" preserveAspectRatio="none" style="display:block;filter:blur(0.6px)"><rect width="73" height="52" fill="#3c3c4a"/>
<path d="M0 0 H46 V24 C30 28 14 30 0 24Z" fill="#b4a494"/>
<circle cx="44" cy="20" r="17" fill="#d2c4b6"/><circle cx="44" cy="20" r="17" fill="none" stroke="#2a2a30" stroke-width="2"/>
<rect x="60" y="0" width="8" height="52" fill="#1e1e26"/>
<ellipse cx="16" cy="20" rx="6" ry="7" fill="#1e1e24"/>
<ellipse cx="40" cy="20" rx="7" ry="9" fill="#caa88e"/><ellipse cx="38" cy="12" rx="7" ry="4" fill="#d8c8b4"/>
<path d="M20 52 C22 38 30 32 40 32 C50 32 56 40 58 52Z" fill="#24242e"/></svg></div><div class="b" style="left:1224px;top:1236px;width:250px;height:40px;background:#f0f0f2;border-radius:20px"></div><div class="t" style="left:1237.46px;top:1243.09px;font-size:27.3px;line-height:27.3px;color:#2a2935;font-weight:400;">The Queens Road</div><div class="t" style="left:1537.8px;top:1243.09px;width:132.20000000000005px;height:38.2px;overflow:hidden;font-size:27.3px;line-height:27.3px;color:#2a2935;font-weight:400;">Scarf</div><div class="t" style="left:1687.4px;top:1243.09px;font-size:27.3px;line-height:27.3px;color:#2a2935;font-weight:400;">60</div><div class="b" style="left:1838.6px;top:1236px;width:149px;height:40px;background:#f0f0f2;border-radius:20px"></div><div class="t" style="left:1854.67px;top:1243.09px;font-size:27.3px;line-height:27.3px;color:#2a2935;font-weight:400;">Burgundy</div><div class="b" style="left:2446px;top:1236px;width:85px;height:40px;background:#f0f0f2;border-radius:20px"></div><div class="t" style="left:2461.95px;top:1243.09px;font-size:27.3px;line-height:27.3px;color:#2a2935;font-weight:400;">Men</div><div class="t" style="left:2616px;top:1243.09px;width:198px;height:38.2px;overflow:hidden;font-size:27.3px;line-height:27.3px;color:#2a2935;font-weight:400;letter-spacing:0.55px">009475384</div><div class="t" style="left:664.656171875px;top:1310.29px;font-size:19.5px;line-height:19.5px;color:#8b8a94;font-weight:400;">17</div><div class="t" style="left:725px;top:1306.16px;font-size:28.4px;line-height:28.4px;color:#2a2935;font-weight:700;letter-spacing:1.1px"><span style="margin-left:-1.9px;letter-spacing:-1.7px">1</span>0000<span style="margin-left:-1.9px;letter-spacing:-1.7px">1</span>7</div><div class="b" style="left:1024px;top:1294px;width:78px;height:52px;border-radius:8px;overflow:hidden"><svg width="78" height="52" viewBox="0 0 78 52" preserveAspectRatio="none" style="display:block;filter:blur(0.6px)"><rect width="78" height="52" fill="#c2a472"/>
<path d="M0 0 H78 V12 C50 16 30 8 0 14Z" fill="#a87c50"/>
<path d="M8 28 L30 18 L60 20 L70 40 L64 52 H14Z" fill="#9e9486"/>
<ellipse cx="42" cy="24" rx="12" ry="13" fill="#8a7656"/>
<path d="M18 40 H62 L60 52 H20Z" fill="#a4a660"/></svg></div><div class="b" style="left:1224px;top:1300px;width:194.6px;height:40px;background:#f0f0f2;border-radius:20px"></div><div class="t" style="left:1239.37px;top:1307.09px;font-size:27.3px;line-height:27.3px;color:#2a2935;font-weight:400;">The Mill Lane</div><div class="t" style="left:1537.8px;top:1307.09px;width:132.20000000000005px;height:38.2px;overflow:hidden;font-size:27.3px;line-height:27.3px;color:#2a2935;font-weight:400;">Bag</div><div class="t" style="left:1687.4px;top:1307.09px;font-size:27.3px;line-height:27.3px;color:#2a2935;font-weight:400;">35</div><div class="b" style="left:1838.6px;top:1300px;width:212px;height:40px;background:#f0f0f2;border-radius:20px"></div><div class="t" style="left:1855.09px;top:1307.09px;font-size:27.3px;line-height:27.3px;color:#2a2935;font-weight:400;">Dessert Brown</div><div class="b" style="left:2446px;top:1300px;width:88px;height:40px;background:#f0f0f2;border-radius:20px"></div><div class="t" style="left:2461.93px;top:1307.09px;font-size:27.3px;line-height:27.3px;color:#2a2935;font-weight:400;">Cats</div><div class="t" style="left:2616px;top:1307.09px;width:198px;height:38.2px;overflow:hidden;font-size:27.3px;line-height:27.3px;color:#2a2935;font-weight:400;letter-spacing:0.55px">00934574332</div><div class="t" style="left:664.656171875px;top:1374.29px;font-size:19.5px;line-height:19.5px;color:#8b8a94;font-weight:400;">18</div><div class="t" style="left:725px;top:1370.16px;font-size:28.4px;line-height:28.4px;color:#2a2935;font-weight:700;letter-spacing:1.1px"><span style="margin-left:-1.9px;letter-spacing:-1.7px">1</span>0000<span style="margin-left:-1.9px;letter-spacing:-1.7px">1</span>8</div><div class="b" style="left:1024px;top:1358px;width:78px;height:52px;border-radius:8px;overflow:hidden"><svg width="78" height="52" viewBox="0 0 78 52" preserveAspectRatio="none" style="display:block;filter:blur(0.6px)"><rect width="78" height="52" fill="#4c3420"/>
<rect x="0" y="0" width="13" height="52" fill="#8a9444"/>
<rect x="12" y="2" width="66" height="5" fill="#9a9692"/>
<rect x="12" y="36" width="66" height="16" fill="#2c1e14"/>
<ellipse cx="24" cy="34" rx="12" ry="8" fill="#d6bea6"/><ellipse cx="18" cy="30" rx="5" ry="5" fill="#3a2a20"/>
<path d="M14 46 H76" stroke="#6a5040" stroke-width="2"/></svg></div><div class="b" style="left:1224px;top:1364px;width:279.7px;height:40px;background:#f0f0f2;border-radius:20px"></div><div class="t" style="left:1239.41px;top:1371.09px;font-size:27.3px;line-height:27.3px;color:#2a2935;font-weight:400;">The Alexander Road</div><div class="t" style="left:1537.8px;top:1371.09px;width:132.20000000000005px;height:38.2px;overflow:hidden;font-size:27.3px;line-height:27.3px;color:#2a2935;font-weight:400;">Bag</div><div class="t" style="left:1687.4px;top:1371.09px;font-size:27.3px;line-height:27.3px;color:#2a2935;font-weight:400;">45</div><div class="b" style="left:1838.6px;top:1364px;width:212px;height:40px;background:#f0f0f2;border-radius:20px"></div><div class="t" style="left:1855.09px;top:1371.09px;font-size:27.3px;line-height:27.3px;color:#2a2935;font-weight:400;">Dessert Brown</div><div class="b" style="left:2446px;top:1364px;width:88px;height:40px;background:#f0f0f2;border-radius:20px"></div><div class="t" style="left:2461.93px;top:1371.09px;font-size:27.3px;line-height:27.3px;color:#2a2935;font-weight:400;">Cats</div><div class="t" style="left:2616px;top:1371.09px;width:198px;height:38.2px;overflow:hidden;font-size:27.3px;line-height:27.3px;color:#2a2935;font-weight:400;letter-spacing:0.55px">009734584392</div><svg class="b" style="left:726px;top:1430px;" width="36" height="36" viewBox="0 0 36 36"><path d="M18 4.5 V31.5 M4.5 18 H31.5" stroke="#555566" stroke-width="3.2" stroke-linecap="round"/></svg><div class="t" style="left:773.5px;top:1436.57px;font-size:26.5px;line-height:26.5px;color:#555566;font-weight:700;">New row</div><div class="b" style="left:2762px;top:1682px;width:76px;height:76px;border-radius:50%;background:#33323f;box-shadow:0 6px 24px rgba(0,0,0,0.10)"></div><svg class="b" style="left:2780px;top:1695px;" width="40" height="50" viewBox="0 0 40 50"><path d="M12.2 17 C12.2 12 15.6 9 20.2 9 C24.8 9 28.2 12 28.2 16.5 C28.2 20.5 25.5 22.5 23 24.5 C20.8 26.3 19.8 28 19.8 31" fill="none" stroke="#fff" stroke-width="3.4" stroke-linecap="round"/><circle cx="19.3" cy="38" r="3.1" fill="#fff"/></svg></div></body></html>
